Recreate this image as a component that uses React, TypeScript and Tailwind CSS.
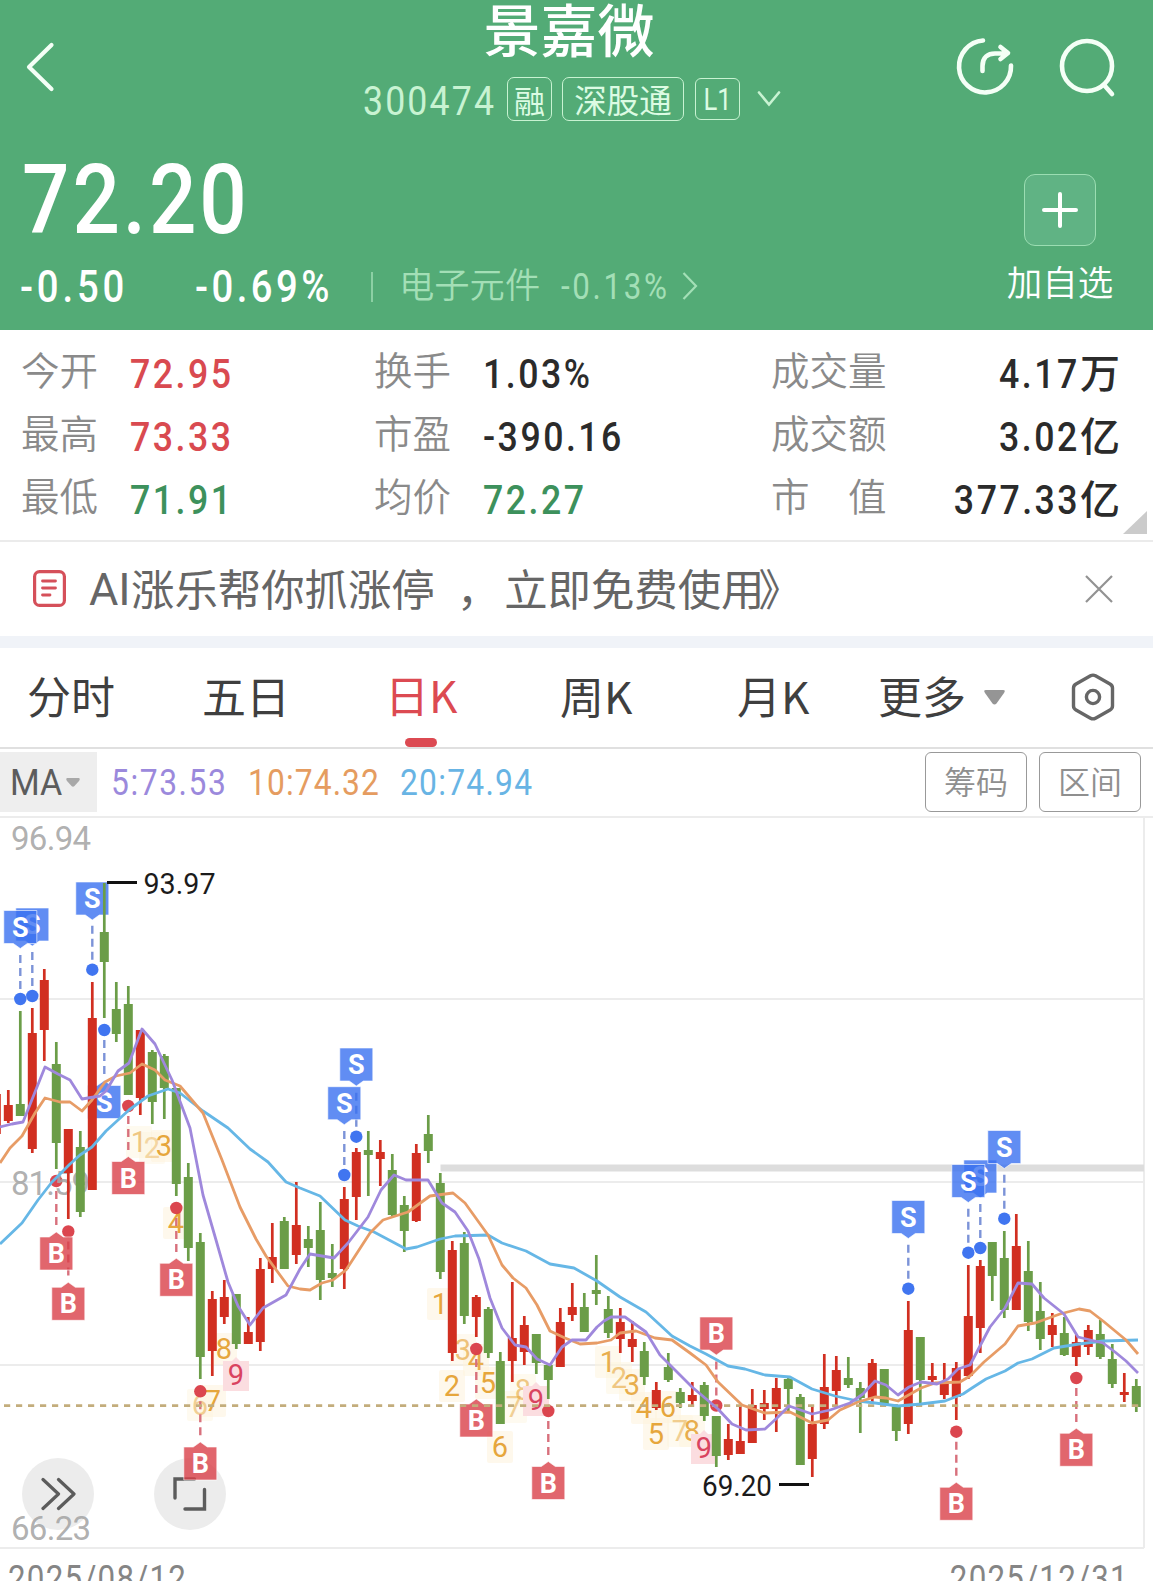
import type { ReactNode } from "react";

const cn = (...parts: (string | undefined)[]) => parts.filter(Boolean).join(" ");

type Candle = ["u" | "d", number, number, number, number];

// side, high, body top, body bottom, low
const candles: Candle[] = [
  ["u", 1094, 1094, 1134, 1134],
  ["u", 1090, 1105, 1121, 1123],
  ["d", 1011, 1104, 1116, 1116],
  ["u", 1008, 1033, 1149, 1153],
  ["u", 969, 980, 1030, 1061],
  ["d", 1042, 1064, 1143, 1169],
  ["u", 1129, 1129, 1173, 1219],
  ["d", 1131, 1147, 1212, 1217],
  ["u", 982, 1018, 1190, 1190],
  ["d", 883, 932, 962, 1018],
  ["d", 982, 1009, 1034, 1042],
  ["d", 986, 1004, 1095, 1095],
  ["u", 1030, 1030, 1098, 1115],
  ["d", 1050, 1052, 1102, 1124],
  ["d", 1054, 1056, 1088, 1119],
  ["d", 1088, 1088, 1184, 1196],
  ["d", 1163, 1177, 1248, 1261],
  ["d", 1233, 1242, 1357, 1379],
  ["u", 1291, 1299, 1351, 1376],
  ["u", 1280, 1297, 1317, 1324],
  ["d", 1294, 1294, 1344, 1349],
  ["u", 1317, 1332, 1344, 1344],
  ["u", 1258, 1269, 1342, 1351],
  ["u", 1223, 1257, 1269, 1283],
  ["d", 1217, 1221, 1269, 1269],
  ["u", 1182, 1225, 1255, 1264],
  ["d", 1226, 1239, 1248, 1267],
  ["d", 1202, 1230, 1280, 1300],
  ["d", 1244, 1273, 1278, 1287],
  ["u", 1187, 1199, 1269, 1289],
  ["u", 1148, 1152, 1197, 1220],
  ["d", 1131, 1150, 1155, 1196],
  ["u", 1140, 1152, 1159, 1186],
  ["d", 1154, 1170, 1215, 1216],
  ["d", 1196, 1205, 1231, 1252],
  ["u", 1144, 1153, 1221, 1222],
  ["d", 1115, 1134, 1151, 1163],
  ["d", 1173, 1183, 1272, 1279],
  ["u", 1241, 1250, 1353, 1361],
  ["d", 1232, 1243, 1316, 1324],
  ["u", 1295, 1297, 1317, 1337],
  ["d", 1307, 1309, 1353, 1358],
  ["d", 1352, 1361, 1424, 1424],
  ["u", 1282, 1338, 1361, 1382],
  ["u", 1316, 1325, 1352, 1365],
  ["d", 1334, 1334, 1363, 1374],
  ["d", 1365, 1365, 1380, 1399],
  ["u", 1308, 1322, 1367, 1367],
  ["u", 1283, 1307, 1315, 1321],
  ["d", 1293, 1307, 1332, 1332],
  ["d", 1255, 1290, 1294, 1305],
  ["d", 1296, 1309, 1333, 1338],
  ["u", 1308, 1322, 1339, 1353],
  ["u", 1321, 1339, 1347, 1362],
  ["d", 1342, 1351, 1377, 1385],
  ["u", 1382, 1390, 1408, 1410],
  ["d", 1353, 1367, 1380, 1382],
  ["d", 1388, 1392, 1403, 1408],
  ["u", 1382, 1395, 1401, 1405],
  ["d", 1382, 1385, 1416, 1421],
  ["d", 1416, 1416, 1456, 1467],
  ["u", 1424, 1439, 1455, 1460],
  ["u", 1405, 1441, 1454, 1454],
  ["u", 1389, 1405, 1443, 1443],
  ["u", 1390, 1403, 1409, 1420],
  ["u", 1378, 1388, 1409, 1432],
  ["d", 1377, 1379, 1389, 1412],
  ["d", 1394, 1397, 1465, 1465],
  ["u", 1407, 1424, 1459, 1477],
  ["u", 1354, 1387, 1424, 1429],
  ["u", 1356, 1370, 1391, 1405],
  ["d", 1357, 1378, 1385, 1388],
  ["d", 1382, 1388, 1398, 1433],
  ["u", 1359, 1363, 1398, 1403],
  ["d", 1369, 1369, 1405, 1405],
  ["d", 1404, 1405, 1431, 1441],
  ["u", 1301, 1330, 1424, 1434],
  ["d", 1337, 1337, 1380, 1405],
  ["u", 1363, 1376, 1380, 1383],
  ["u", 1363, 1382, 1395, 1399],
  ["u", 1362, 1368, 1397, 1420],
  ["u", 1265, 1316, 1376, 1379],
  ["u", 1260, 1266, 1328, 1353],
  ["d", 1242, 1242, 1276, 1301],
  ["d", 1231, 1258, 1310, 1318],
  ["u", 1214, 1246, 1310, 1310],
  ["d", 1241, 1271, 1322, 1331],
  ["d", 1282, 1311, 1339, 1350],
  ["u", 1313, 1325, 1335, 1347],
  ["d", 1317, 1333, 1355, 1356],
  ["u", 1335, 1342, 1357, 1366],
  ["u", 1325, 1330, 1347, 1355],
  ["d", 1320, 1334, 1357, 1359],
  ["d", 1344, 1359, 1384, 1388],
  ["u", 1373, 1392, 1395, 1402],
  ["d", 1379, 1386, 1407, 1412],
];

const candleX = (i: number) => 8.3 + (i - 1) * 12;

const ma5 =
  "0,1127 12,1124 23,1122 45,1067 58,1074 70,1080 82,1099 100,1096 106,1091 118,1071 129,1063 142,1029 155,1044 172,1080 190,1128 203,1195 216,1240 228,1282 238,1306 250,1325 263,1308 286,1295 300,1269 310,1254 334,1258 348,1243 368,1217 381,1190 394,1175 406,1180 428,1180 442,1203 455,1212 468,1231 479,1259 490,1298 502,1328 515,1345 526,1347 537,1359 550,1365 562,1347 572,1340 586,1340 597,1327 604,1321 611,1317 625,1317 646,1332 660,1355 675,1370 692,1387 718,1409 732,1424 746,1430 765,1429 777,1418 789,1406 812,1414 830,1410 850,1403 863,1394 875,1381 886,1385 898,1395 909,1387 921,1382 937,1384 948,1379 958,1369 970,1365 990,1327 1005,1308 1018,1283 1032,1284 1044,1298 1064,1314 1078,1337 1103,1343 1115,1352 1126,1361 1138,1373";
const ma10 =
  "0,1163 10,1148 22,1136 35,1113 45,1098 60,1102 70,1102 82,1111 92,1100 105,1082 116,1076 130,1073 142,1064 155,1070 165,1080 180,1086 203,1113 222,1160 240,1207 256,1239 266,1256 288,1286 300,1289 310,1290 322,1283 333,1280 346,1270 370,1233 383,1220 408,1212 430,1196 453,1193 465,1203 488,1235 502,1265 513,1278 526,1288 537,1305 550,1331 565,1338 580,1344 597,1343 611,1340 620,1333 636,1331 655,1338 672,1340 690,1353 706,1365 718,1382 742,1405 765,1413 790,1412 812,1423 828,1420 840,1410 858,1402 875,1397 886,1398 898,1401 921,1388 935,1383 960,1382 970,1376 984,1362 1005,1344 1018,1326 1035,1323 1060,1314 1079,1309 1090,1311 1103,1321 1126,1340 1138,1354";
const ma20 =
  "0,1244 22,1223 38,1200 52,1182 70,1164 80,1155 92,1147 106,1131 129,1110 148,1096 168,1089 180,1093 203,1111 228,1128 250,1149 268,1162 286,1182 300,1188 320,1196 345,1220 358,1226 374,1232 406,1249 417,1247 440,1239 455,1236 488,1235 502,1243 526,1251 550,1264 574,1268 597,1281 620,1297 646,1312 672,1336 690,1346 706,1354 728,1366 745,1369 765,1375 790,1377 812,1389 835,1396 858,1401 875,1403 898,1406 921,1404 945,1401 963,1394 972,1388 986,1379 1005,1371 1018,1363 1032,1359 1054,1348 1079,1344 1103,1341 1138,1340";

type Trade = { side: "S" | "B"; x: number; top: number; dot: number };

const trades: Trade[] = [
  { side: "S", x: 32.3, top: 908, dot: 996 },
  { side: "S", x: 20.3, top: 910.5, dot: 999 },
  { side: "S", x: 92.3, top: 882, dot: 969.7 },
  { side: "S", x: 104.3, top: 1085.5, dot: 1030 },
  { side: "S", x: 356.3, top: 1048, dot: 1136.7 },
  { side: "S", x: 344.3, top: 1086.7, dot: 1175 },
  { side: "S", x: 908.3, top: 1200.5, dot: 1288.7 },
  { side: "S", x: 980.3, top: 1160, dot: 1248 },
  { side: "S", x: 968.3, top: 1164.5, dot: 1252.7 },
  { side: "S", x: 1004.3, top: 1130.5, dot: 1218.7 },
  { side: "B", x: 68.3, top: 1287.3, dot: 1231.5 },
  { side: "B", x: 56.3, top: 1237, dot: 1181 },
  { side: "B", x: 128.3, top: 1161.5, dot: 1106 },
  { side: "B", x: 176.3, top: 1263.3, dot: 1208 },
  { side: "B", x: 200.3, top: 1447, dot: 1391.3 },
  { side: "B", x: 476.3, top: 1404, dot: 1349 },
  { side: "B", x: 548.3, top: 1466.5, dot: 1411 },
  { side: "B", x: 716.3, top: 1317, dot: 1405.5 },
  { side: "B", x: 956.3, top: 1487.3, dot: 1431.7 },
  { side: "B", x: 1076.3, top: 1433.3, dot: 1378 },
];

// text, x, baseline, opacity
const counts: [string, number, number, number][] = [
  ["1", 139, 1152, 0.6],
  ["2", 152, 1158, 0.4],
  ["3", 164, 1156, 1],
  ["4", 176, 1233, 1],
  ["6", 200, 1415, 0.5],
  ["7", 213, 1411, 1],
  ["8", 224, 1359, 1],
  ["1", 440, 1314, 1],
  ["2", 452, 1396, 1],
  ["3", 463, 1360, 0.65],
  ["4", 476, 1370, 0.9],
  ["5", 488, 1393, 1],
  ["6", 500, 1457, 1],
  ["7", 514, 1417, 0.5],
  ["8", 523, 1400, 0.6],
  ["1", 608, 1372, 0.9],
  ["2", 619, 1388, 0.6],
  ["3", 632, 1395, 0.9],
  ["4", 644, 1418, 1],
  ["5", 656, 1444, 1],
  ["6", 668, 1417, 1],
  ["7", 680, 1441, 0.5],
  ["8", 692, 1441, 0.9],
];

const nines: [number, number][] = [
  [236, 1385],
  [536, 1410],
  [704, 1458],
];

function TradeMark({ side, x, top, dot }: Trade) {
  const fill = side === "S" ? "#3a71f0" : "#da4049";
  const dash = side === "S" ? "#7c93d8" : "#d8707c";
  const below = top > dot;
  const tip = below ? top - 5 : top + 38;
  const l = x - 16.5;
  const r = x + 16.5;
  const b = top + 33;
  const box = below
    ? `M${l} ${top}H${x - 7}L${x} ${tip}L${x + 7} ${top}H${r}V${b}H${l}Z`
    : `M${l} ${top}H${r}V${b}H${x + 7}L${x} ${tip}L${x - 7} ${b}H${l}Z`;
  return (
    <g>
      <line
        x1={x}
        x2={x}
        y1={below ? dot + 10 : dot - 10}
        y2={below ? tip - 2 : tip + 5}
        stroke={dash}
        strokeWidth="2.4"
        strokeDasharray="8 5"
      />
      <path d={box} fill={fill} fillOpacity="0.8" stroke="#fff" strokeOpacity="0.6" />
      <circle cx={x} cy={dot} r="6.2" fill={fill} fillOpacity="0.97" />
      <text x={x} y={top + 26} textAnchor="middle" fontSize="27" fontWeight="700" fill="#fff">
        {side}
      </text>
    </g>
  );
}

function KLineChart() {
  return (
    <svg
      className="relative block"
      width="1153"
      height="731"
      viewBox="0 818 1153 731"
      fontFamily="Roboto, sans-serif"
    >
      <g stroke="#ececec" strokeWidth="2">
        <path d="M0 999H1144M0 1182H1144M0 1365H1144M0 1548H1144" />
        <path d="M1144 818V1548" />
      </g>
      <rect x="440.5" y="1164.5" width="703.5" height="7" fill="#dddddd" />

      {counts.map(([, x, y, opacity], i) => (
        <rect key={i} x={x - 13} y={y - 26} width="26" height="32" rx="2" fill="#fdf3dc" opacity={0.3 + opacity * 0.25} />
      ))}
      {counts.map(([text, x, y, opacity], i) => (
        <text key={i} x={x} y={y} textAnchor="middle" fontSize="29" fill="#e6a63c" opacity={opacity}>
          {text}
        </text>
      ))}
      {nines.map(([x, y]) => (
        <g key={x}>
          <path d={`M${x - 13} ${y - 24}h9l4 -4l4 4h9v30h-26z`} fill="#fbdde0" />
          <text x={x} y={y} textAnchor="middle" fontSize="29" fill="#d9435f">
            9
          </text>
        </g>
      ))}

      {trades.map((t) => (
        <TradeMark key={t.x} {...t} />
      ))}

      <g fontSize="33" fill="#a6a6a6" fillOpacity="0.9">
        <text x="11" y="850" textLength="80">96.94</text>
        <text x="11" y="1195" textLength="79">81.59</text>
        <text x="11" y="1540" textLength="80">66.23</text>
      </g>

      {candles.map(([side, high, top, bottom, low], i) => (
        <g key={i} fill={side === "u" ? "#d12f21" : "#6b9d48"}>
          <rect x={candleX(i) - 1.35} y={high} width="2.7" height={low - high} />
          <rect x={candleX(i) - 4.5} y={top} width="9" height={bottom - top} />
        </g>
      ))}

      <path d="M4 1405.7H1144" stroke="#c3ad7c" strokeWidth="2.8" strokeDasharray="6.2 5.8" />
      <g fill="none" strokeWidth="2.8" strokeLinejoin="round">
        <polyline points={ma20} stroke="#66b7e6" />
        <polyline points={ma10} stroke="#e79c66" />
        <polyline points={ma5} stroke="#9f88dc" />
      </g>

      <path d="M107 882.5H137M779 1484.5H809" stroke="#111" strokeWidth="3" />
      <g fontSize="30" fill="#1b1b1b">
        <text x="143.5" y="894" textLength="72" lengthAdjust="spacingAndGlyphs">93.97</text>
        <text x="702" y="1496" textLength="70" lengthAdjust="spacingAndGlyphs">69.20</text>
      </g>
    </svg>
  );
}

type NumProps = { children: ReactNode; className?: string; tracking?: string };

function Num({ children, className, tracking = "tracking-[.07em]" }: NumProps) {
  return (
    <span
      className={cn(
        "inline-block scale-x-[.87] whitespace-nowrap font-['Roboto',sans-serif] leading-none",
        tracking,
        className,
      )}
    >
      {children}
    </span>
  );
}

function Header() {
  return (
    <header className="h-[330px] bg-[#53ab76] text-white">
      <div className="flex h-[130px] justify-between">
        <div className="w-[363px] pl-[26px] pt-[42px]">
          <svg width="30" height="50" viewBox="0 0 30 50" fill="none" stroke="#f4fff6" strokeWidth="4.2" strokeLinecap="round" strokeLinejoin="round">
            <path d="M25.5 3L3 25L25.5 47" />
          </svg>
        </div>
        <div className="w-[430px]">
          <h1 className="h-[54px] w-[412px] text-center text-[57px] font-medium leading-[54px]">景嘉微</h1>
          <div className="mt-[23px] flex h-[44px] items-center text-[#dcfbe3]">
            <div className="w-[144px] pt-[5px]">
              <Num tracking="tracking-[.06em]" className="origin-left text-[41px] text-[#c8f3d2]">300474</Num>
            </div>
            <span className="flex h-[44px] w-[45px] items-center justify-center rounded-[7px] border-[1.5px] border-[#c8f3d2] text-[31px] leading-none">
              融
            </span>
            <span className="ml-[10px] flex h-[44px] w-[122px] items-center justify-center rounded-[7px] border-[1.5px] border-[#c8f3d2] text-[32.5px] leading-none">
              深股通
            </span>
            <span className="ml-[11px] flex h-[42px] w-[45px] items-center justify-center rounded-[6px] border-[1.5px] border-[#c8f3d2] font-['Roboto',sans-serif] text-[32px] leading-none">
              <span className="scale-x-[.8]">L1</span>
            </span>
            <svg className="ml-[17px]" width="24" height="18" viewBox="0 0 24 18" fill="none" stroke="#c8f3d2" strokeWidth="2.6" strokeLinecap="round">
              <path d="M2 2.5L12 14.5L22 2.5" />
            </svg>
          </div>
        </div>
        <div className="flex flex-1 gap-[43px] pl-[161px] pt-[35px]">
          <svg className="shrink-0" width="62" height="62" viewBox="0 0 62 62" fill="none" stroke="#f4fff6" strokeWidth="4.6" strokeLinecap="round" strokeLinejoin="round">
            <path d="M29 5.5A26 26 0 1 0 57 30.500" />
            <path d="M28.500 36V31C28.500 22 34 18.500 41 18.500H52M46.500 12L54 18L46.500 24" />
          </svg>
          <svg className="shrink-0" width="62" height="64" viewBox="0 0 62 64" fill="none" stroke="#f4fff6" strokeWidth="4.6" strokeLinecap="round">
            <circle cx="28" cy="31" r="25" />
            <path d="M45.5 50.5L53 59" />
          </svg>
        </div>
      </div>
      <div className="flex h-[200px] justify-between">
        <div>
          <div className="flex h-[135px] items-center pl-[22px] pt-[5px]">
            <Num tracking="tracking-[.035em]" className="origin-left text-[96px] font-medium">72.20</Num>
          </div>
          <div className="flex h-[44px] items-center pl-[20px]">
            <div className="w-[175px]">
              <Num tracking="tracking-[.1em]" className="origin-left text-[44px] font-medium">-0.50</Num>
            </div>
            <div className="w-[176px]">
              <Num tracking="tracking-[.09em]" className="origin-left text-[44px] font-medium">-0.69%</Num>
            </div>
            <span className="h-[30px] w-[2px] bg-[#8cd0a4]" />
            <span className="ml-[26px] w-[162px] pb-[9px] text-[35.3px] font-[350] leading-none text-[#a3dfb6]">电子元件</span>
            <div className="w-[121px]">
              <Num tracking="tracking-[.085em]" className="origin-left text-[36px] text-[#a3dfb6]">-0.13%</Num>
            </div>
            <svg className="mb-[3px]" width="16" height="30" viewBox="0 0 16 30" fill="none" stroke="#a3dfb6" strokeWidth="2.2">
              <path d="M1.5 2L14 15L1.5 28" />
            </svg>
          </div>
        </div>
        <div className="flex w-[186px] flex-col items-center pt-[44px]">
          <button className="flex h-[72px] w-[72px] items-center justify-center rounded-[11px] border-[1.5px] border-[#9bddb2] bg-[#60b384]">
            <svg width="38" height="38" viewBox="0 0 38 38" stroke="#fff" strokeWidth="4" strokeLinecap="round">
              <path d="M19 3V35M3 19H35" />
            </svg>
          </button>
          <span className="mt-[16px] text-[35.5px] font-[350] leading-[38px]">加自选</span>
        </div>
      </div>
    </header>
  );
}

const quotes = [
  [
    { label: "今开", value: "72.95", color: "text-[#d94a50]" },
    { label: "换手", value: "1.03%", color: "text-[#2b2b2b]" },
    { label: "成交量", value: "4.17", unit: "万" },
  ],
  [
    { label: "最高", value: "73.33", color: "text-[#d94a50]" },
    { label: "市盈", value: "-390.16", color: "text-[#2b2b2b]" },
    { label: "成交额", value: "3.02", unit: "亿" },
  ],
  [
    { label: "最低", value: "71.91", color: "text-[#3d915c]" },
    { label: "均价", value: "72.27", color: "text-[#3d915c]" },
    { label: "市\u3000值", value: "377.33", unit: "亿" },
  ],
];

function Quotes() {
  return (
    <section className="relative h-[212px] border-b-2 border-[#ebebeb] pt-[12px]">
      {quotes.map(([a, b, c]) => (
        <div key={a.label} className="flex h-[63px] items-center">
          <span className="w-[108px] pb-[11px] pl-[21px] text-[38.5px] font-[350] leading-none text-[#8a8a8a]">{a.label}</span>
          <div className="w-[266px] pl-[22px] pt-[2px]">
            <Num className={cn("origin-left text-[41px] font-medium", a.color)}>{a.value}</Num>
          </div>
          <span className="w-[109px] pb-[11px] text-[38.5px] font-[350] leading-none text-[#8a8a8a]">{b.label}</span>
          <div className="w-[288px] pt-[2px]">
            <Num className={cn("origin-left text-[41px] font-medium", b.color)}>{b.value}</Num>
          </div>
          <span className="w-[120px] whitespace-nowrap pb-[11px] text-[38.5px] font-[350] leading-none text-[#8a8a8a]">{c.label}</span>
          <div className="flex w-[229px] items-center justify-end text-[#2b2b2b]">
            <Num className="origin-right pt-[2px] text-[41px] font-medium">{c.value}</Num>
            <span className="pb-[5px] text-[40px] font-medium leading-none">{c.unit}</span>
          </div>
        </div>
      ))}
      <svg className="absolute bottom-[6px] right-[6px]" width="24" height="23" viewBox="0 0 24 23">
        <path d="M24 0V23H0Z" fill="#cbcbcb" />
      </svg>
    </section>
  );
}

function Notice() {
  return (
    <section className="flex h-[106px] items-center border-b-[12px] border-[#f0f3f8] pl-[33px] pr-[40px]">
      <svg className="mb-[2px]" width="33" height="37" viewBox="0 0 33 37" fill="none" stroke="#d5505a" strokeWidth="3.2" strokeLinecap="round">
        <rect x="1.6" y="1.6" width="29.800" height="33.800" rx="5" />
        <path d="M9.5 11H22.5M9.5 18H22.5M9.500 25H17" strokeWidth="2.8" />
      </svg>
      <p className="ml-[23px] flex flex-1 items-center whitespace-nowrap pb-[2px] text-[43.4px] leading-none text-[#666]">
        <span className="w-[42px] pt-[2px] font-['Roboto',sans-serif] text-[45px]">AI</span>
        <span>涨乐帮你抓涨停</span>
        <span className="ml-[22px]">，</span>
        <span className="ml-[4px]">立即免费使用</span>
        <span className="-ml-[6px]">》</span>
      </p>
      <svg width="28" height="28" viewBox="0 0 28 28" stroke="#929292" strokeWidth="2.2">
        <path d="M1 1L27 27M27 1L1 27" />
      </svg>
    </section>
  );
}

function Tabs() {
  return (
    <nav className="flex h-[101px] items-center border-b-2 border-[#e0e0e0] text-[44px] leading-none text-[#3f3f3f]">
      <span className="w-[176px] pb-[6px] pl-[27px]">分时</span>
      <span className="w-[209px] pb-[6px] pl-[26px]">五日</span>
      <div className="flex h-full w-[175px] flex-col text-[#dc4a52]">
        <span className="pt-[24px]">日K</span>
        <span className="ml-[20px] mt-[22px] h-[9px] w-[32px] rounded-full bg-[#dc4a52]" />
      </div>
      <span className="w-[177px] pb-[6px]">周K</span>
      <span className="w-[141px] pb-[6px]">月K</span>
      <span className="w-[106px] pb-[6px]">更多</span>
      <svg width="21" height="15" viewBox="0 0 21 15" fill="#959595">
        <path d="M2 0H19Q22 0 20 3L12.5 13.5Q10.5 15.5 8.5 13.5L1 3Q-1 0 2 0Z" />
      </svg>
      <svg className="mb-[2px] ml-[66px]" width="44" height="48" viewBox="0 0 44 48" fill="none" stroke="#666" strokeWidth="3.4" strokeLinejoin="round">
        <path d="M19.5 2.8Q22 1.4 24.5 2.8L39 11Q41.5 12.5 41.5 15V33Q41.5 35.5 39 37L24.5 45.2Q22 46.6 19.5 45.2L5 37Q2.5 35.5 2.5 33V15Q2.5 12.5 5 11Z" />
        <circle cx="22" cy="24" r="6.6" />
      </svg>
    </nav>
  );
}

function IndicatorBar() {
  return (
    <div className="flex h-[69px] items-start border-b-2 border-[#ececec] pt-[3px]">
      <div className="flex h-[60px] w-[97px] items-center bg-[#eeeeee] pl-[10px] text-[#5c5c5c]">
        <span className="w-[56px] font-['Roboto',sans-serif] text-[37px] leading-none">
          <span className="inline-block origin-left scale-x-[.92]">MA</span>
        </span>
        <svg width="14" height="9" viewBox="0 0 14 9" fill="#a8a8a8">
          <path d="M1 0H13Q14.5 1 13 3L8.5 8Q7 9.5 5.5 8L1 3Q-.5 1 1 0Z" />
        </svg>
      </div>
      <div className="flex h-[60px] flex-1 items-center pl-[14px] pt-[3px]">
        <div className="w-[137px]">
          <Num tracking="tracking-[.05em]" className="origin-left text-[36.5px] text-[#9b89dc]">5:73.53</Num>
        </div>
        <div className="w-[152px]">
          <Num tracking="tracking-[.035em]" className="origin-left text-[36.5px] text-[#e59c60]">10:74.32</Num>
        </div>
        <Num tracking="tracking-[.04em]" className="origin-left text-[36.5px] text-[#68b4e4]">20:74.94</Num>
      </div>
      <div className="flex gap-3 pr-3 text-[32px] font-[350] leading-none text-[#8f8f8f]">
        <button className="h-[60px] w-[102px] rounded-[6px] border-[1.5px] border-[#999] pb-1">筹码</button>
        <button className="h-[60px] w-[102px] rounded-[6px] border-[1.5px] border-[#999] pb-1">区间</button>
      </div>
    </div>
  );
}

export default function App() {
  return (
    <div className="h-[1581px] w-[1153px] overflow-hidden bg-white font-['Noto_Sans_CJK_SC',sans-serif]">
      <Header />
      <Quotes />
      <Notice />
      <Tabs />
      <IndicatorBar />
      <div className="relative h-[731px]">
        <button className="absolute left-[22px] top-[640px] flex h-[72px] w-[72px] items-center justify-center rounded-full bg-[#ececec]" aria-label="展开">
          <svg width="36" height="34" viewBox="0 0 36 34" fill="none" stroke="#5c5c5c" strokeWidth="3.2" strokeLinecap="round" strokeLinejoin="round">
            <path d="M3 2.5L18.500 17L3 31.5M18.5 2.5L34 17L18.5 31.5" />
          </svg>
        </button>
        <button className="absolute left-[154px] top-[640px] flex h-[72px] w-[72px] items-center justify-center rounded-full bg-[#ececec]" aria-label="全屏">
          <svg width="34" height="34" viewBox="0 0 34 34" fill="none" stroke="#5c5c5c" strokeWidth="3.4" strokeLinecap="round">
            <path d="M21.5 2H2V21M31.5 12.5V32H12" />
          </svg>
        </button>
        <KLineChart />
      </div>
      <div className="flex h-[32px] justify-between overflow-hidden pl-[8px] pr-[24px] pt-[12px] text-[#858585]">
        <Num tracking="tracking-[.04em]" className="origin-left text-[36px]">2025/08/12</Num>
        <Num tracking="tracking-[.04em]" className="origin-right text-[36px]">2025/12/31</Num>
      </div>
    </div>
  );
}
